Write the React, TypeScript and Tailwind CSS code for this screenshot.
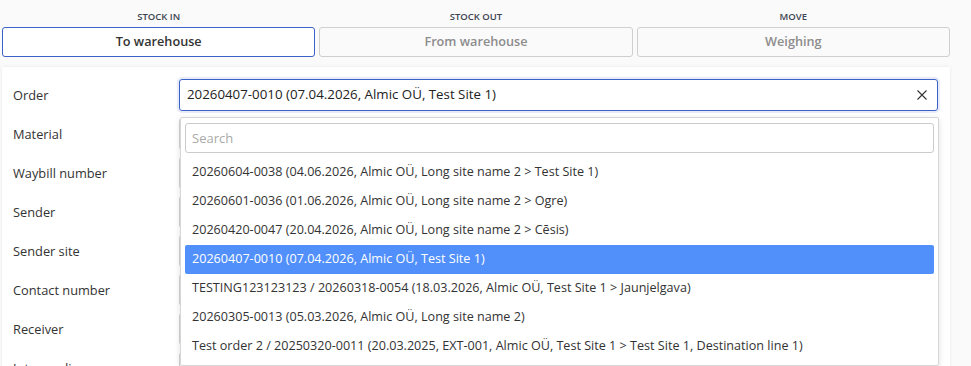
import { useState } from "react";

const tabs = [
  { group: "STOCK IN", label: "To warehouse" },
  { group: "STOCK OUT", label: "From warehouse" },
  { group: "MOVE", label: "Weighing" },
];

const fields = [
  "Order",
  "Material",
  "Waybill number",
  "Sender",
  "Sender site",
  "Contact number",
  "Receiver",
  "Intermediary",
];

const orders = [
  "20260604-0038 (04.06.2026, Almic OÜ, Long site name 2 > Test Site 1)",
  "20260601-0036 (01.06.2026, Almic OÜ, Long site name 2 > Ogre)",
  "20260420-0047 (20.04.2026, Almic OÜ, Long site name 2 > Cēsis)",
  "20260407-0010 (07.04.2026, Almic OÜ, Test Site 1)",
  "TESTING123123123 / 20260318-0054 (18.03.2026, Almic OÜ, Test Site 1 > Jaunjelgava)",
  "20260305-0013 (05.03.2026, Almic OÜ, Long site name 2)",
  "Test order 2 / 20250320-0011 (20.03.2025, EXT-001, Almic OÜ, Test Site 1 > Test Site 1, Destination line 1)",
];

export default function App() {
  const [active, setActive] = useState(0);
  const [selected, setSelected] = useState(3);

  return (
    <div
      className="h-[366px] overflow-hidden bg-[#fafafa] text-[#333]"
      style={{ fontFamily: '"Open Sans", "Liberation Sans", sans-serif' }}
    >
      <div className="ml-[2px] w-[948px]">
        {/* movement type tabs */}
        <div className="grid grid-cols-3 gap-[4px] pt-[10px]">
          {tabs.map((t, i) => (
            <div key={t.group} className="flex flex-col items-center">
              <div className="h-[17px] text-[9.5px] leading-[14px] font-semibold text-[#3d4451]">
                {t.group}
              </div>
              <button
                onClick={() => setActive(i)}
                className={
                  i === active
                    ? "h-[30px] w-full rounded-[3px] border border-[#3b62c9] bg-white text-[12.7px] font-semibold text-[#333]"
                    : "h-[30px] w-full rounded-[3px] border border-[#cfcfcf] bg-[#fafafa] text-[12.7px] font-semibold text-[#8c8c8c]"
                }
              >
                {t.label}
              </button>
            </div>
          ))}
        </div>

        {/* form card */}
        <div className="relative mt-[10px] bg-white pt-[12px] pl-[11px] pr-[12px] shadow-[0_0_3px_rgba(0,0,0,0.08)]">
          <div className="flex flex-col">
            {fields.map((f, i) => (
              <div key={f} className="flex h-[39px] items-start">
                <div className="w-[166px] pt-[6px] text-[12.8px] leading-[20px] text-[#333]">
                  {f}
                </div>
                {i === 0 ? (
                  <div className="flex h-[32px] flex-1 items-center rounded-[3px] border border-[#3b62c9] pl-[7px] pr-[8px] shadow-[0_0_0_2px_rgba(59,98,201,0.12)]">
                    <span className="flex-1 text-[13.3px] text-[#222]">
                      {orders[selected]}
                    </span>
                    <svg width="12" height="12" viewBox="0 0 12 12" className="mr-[1px]">
                      <path d="M1.5 1.5 L10.5 10.5 M10.5 1.5 L1.5 10.5" stroke="#333" strokeWidth="1.1" />
                    </svg>
                  </div>
                ) : (
                  <div className="h-[32px] flex-1 rounded-[3px] border border-[#d4d4d4]" />
                )}
              </div>
            ))}
          </div>

          {/* open dropdown */}
          <div className="absolute left-[178px] top-[50px] w-[759px] rounded-[2px] border border-[#d6d6d6] bg-white px-[4px] pt-[5px] pb-[4px] shadow-[0_2px_6px_rgba(0,0,0,0.12)]">
            <input
              placeholder="Search"
              className="h-[30px] w-full rounded-[3px] border border-[#cbcbcb] px-[6px] text-[13px] text-[#333] outline-none placeholder:text-[#aaa]"
            />
            <div className="mt-[5px] flex flex-col">
              {orders.map((o, i) => (
                <div
                  key={o}
                  onClick={() => setSelected(i)}
                  className={
                    i === selected
                      ? "flex h-[29px] items-center rounded-[2px] bg-[#5190fb] px-[7px] text-[12.6px] whitespace-nowrap text-white"
                      : "flex h-[29px] items-center px-[7px] text-[12.6px] whitespace-nowrap text-[#333]"
                  }
                >
                  {o}
                </div>
              ))}
            </div>
          </div>
        </div>
      </div>
    </div>
  );
}
